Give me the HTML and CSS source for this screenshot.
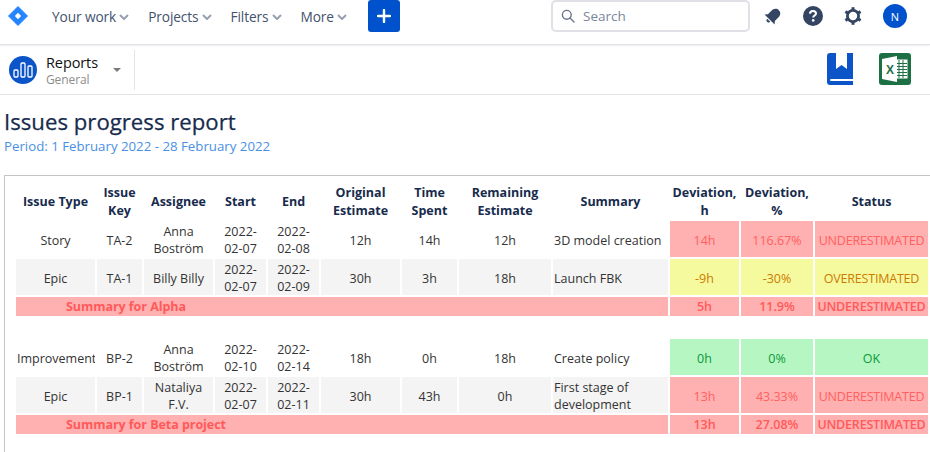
FILE: index.html
```html
<!DOCTYPE html>
<html lang="en">
<head>
<meta charset="utf-8">
<title>Issues progress report</title>
<link rel="stylesheet" href="styles.css">
</head>
<body>
<header class="topnav">
  <svg class="logo" width="20" height="20" viewBox="0 0 20 20"><path d="M10 0.500 L19.500 10 L10 19.500 L0.500 10 Z" fill="#2684ff" stroke="#2684ff" stroke-linejoin="round"/><path d="M10 6.800 L13.200 10 L10 13.200 L6.800 10 Z" fill="#fff"/></svg>
  <nav class="menu">
    <span class="menu-item">Your work<svg class="chev" width="10" height="6" viewBox="0 0 10 6"><path d="M1 1 L5 5 L9 1" fill="none" stroke="#97a0af" stroke-width="2"/></svg></span>
    <span class="menu-item">Projects<svg class="chev" width="10" height="6" viewBox="0 0 10 6"><path d="M1 1 L5 5 L9 1" fill="none" stroke="#97a0af" stroke-width="2"/></svg></span>
    <span class="menu-item">Filters<svg class="chev" width="10" height="6" viewBox="0 0 10 6"><path d="M1 1 L5 5 L9 1" fill="none" stroke="#97a0af" stroke-width="2"/></svg></span>
    <span class="menu-item">More<svg class="chev" width="10" height="6" viewBox="0 0 10 6"><path d="M1 1 L5 5 L9 1" fill="none" stroke="#97a0af" stroke-width="2"/></svg></span>
  </nav>
  <div class="create"><svg width="14" height="14" viewBox="0 0 14 14"><path d="M7 1 V13 M1 7 H13" stroke="#fff" stroke-width="2.400" stroke-linecap="round"/></svg></div>
  <div class="spring"></div>
  <div class="search">
    <svg width="14" height="14" viewBox="0 0 14 14"><circle cx="5.800" cy="5.800" r="4.400" fill="none" stroke="#6b778c" stroke-width="1.400"/><path d="M9 9 L13 13" stroke="#6b778c" stroke-width="1.400" stroke-linecap="round"/></svg>
    <span>Search</span>
  </div>
  <svg class="bell" width="18" height="18" viewBox="0 0 24 24"><g transform="rotate(45 12 12)" fill="#344563"><path d="M12 1 C7.500 1 5.500 4.500 5.500 9 V15 L2.500 18.500 H21.500 L18.500 15 V9 C18.500 4.500 16.500 1 12 1 Z"/><path d="M9 20 H15 C15 24 9 24 9 20 Z"/></g></svg>
  <svg class="help" width="20" height="20" viewBox="0 0 20 20"><circle cx="10" cy="10" r="10" fill="#344563"/><path d="M7 7.700 C7 5.900 8.400 5 10 5 C11.700 5 13 6 13 7.500 C13 9.600 10.200 9.500 10.200 11.600" fill="none" stroke="#fff" stroke-width="2"/><circle cx="10.200" cy="14.400" r="1.300" fill="#fff"/></svg>
  <svg class="gear" width="18" height="18" viewBox="0 0 18 18"><circle cx="9" cy="9" r="5.600" fill="none" stroke="#344563" stroke-width="2.800"/><g stroke="#344563" stroke-width="3"><path d="M9 0.200 V3"/><path d="M9 15 V17.800"/><path d="M1.400 4.600 L3.800 6"/><path d="M14.200 12 L16.600 13.400"/><path d="M1.400 13.400 L3.800 12"/><path d="M14.200 6 L16.600 4.600"/></g></svg>
  <div class="avatar">N</div>
</header>

<section class="subbar">
  <div class="project">
    <div class="project-icon"><svg width="20" height="16" viewBox="0 0 20 16"><g fill="none" stroke="#fff" stroke-width="1.300"><rect x="1" y="8" width="4" height="7" rx="1"/><rect x="8" y="1" width="4" height="14" rx="1"/><rect x="15" y="4" width="4" height="11" rx="1"/></g></svg></div>
    <div class="project-text"><div class="project-name">Reports</div><div class="project-sub">General</div></div>
    <div class="caret"></div>
  </div>
  <div class="spring"></div>
  <svg class="book" width="26" height="32" viewBox="0 0 26 32"><path d="M3 0 H9 V16 L14.500 12 L20 16 V0 H26 V26 H4 C2.700 26 2.700 28 4 28 H26 V32 H3 C1.200 32 0 30.800 0 29 V3 C0 1.200 1.200 0 3 0 Z" fill="#0b55c9"/></svg>
  <svg class="excel" width="32" height="32" viewBox="0 0 32 32"><rect width="32" height="32" rx="3" fill="#1d7044"/><path d="M3 6 L18 3 V29 L3 26 Z" fill="#fff"/><rect x="18" y="6.500" width="10.500" height="19" fill="#fff"/><g stroke="#1d7044" stroke-width="1"><path d="M20 7 V25 M24 7 V25 M18 10.500 H28 M18 13.500 H28 M18 16.500 H28 M18 19.500 H28 M18 22.500 H28"/></g><text x="7" y="21" class="excel-x">X</text></svg>
</section>

<main class="content">
  <h1>Issues progress report</h1>
  <p class="period">Period: 1 February 2022 - 28 February 2022</p>
  <div class="report-frame">
    <table class="report">
      <colgroup>
        <col class="c1"><col class="c2"><col class="c3"><col class="c4"><col class="c5"><col class="c6"><col class="c7"><col class="c8"><col class="c9"><col class="c10"><col class="c11"><col class="c12">
      </colgroup>
      <thead>
        <tr><th>Issue Type</th><th>Issue Key</th><th>Assignee</th><th>Start</th><th>End</th><th>Original Estimate</th><th>Time Spent</th><th>Remaining Estimate</th><th>Summary</th><th>Deviation, h</th><th>Deviation, %</th><th>Status</th></tr>
      </thead>
      <tbody>
        <tr><td>Story</td><td>TA-2</td><td>Anna Boström</td><td>2022-02-07</td><td>2022-02-08</td><td>12h</td><td>14h</td><td>12h</td><td class="left">3D model creation</td><td class="red">14h</td><td class="red">116.67%</td><td class="red status">UNDERESTIMATED</td></tr>
        <tr class="alt"><td>Epic</td><td>TA-1</td><td>Billy Billy</td><td>2022-02-07</td><td>2022-02-09</td><td>30h</td><td>3h</td><td>18h</td><td class="left">Launch FBK</td><td class="yellow">-9h</td><td class="yellow">-30%</td><td class="yellow status">OVERESTIMATED</td></tr>
        <tr class="sum"><td colspan="9"><span class="sum-label">Summary for Alpha</span></td><td>5h</td><td>11.9%</td><td class="status">UNDERESTIMATED</td></tr>
        <tr class="gap"><td colspan="12"></td></tr>
        <tr><td>Improvement</td><td>BP-2</td><td>Anna Boström</td><td>2022-02-10</td><td>2022-02-14</td><td>18h</td><td>0h</td><td>18h</td><td class="left">Create policy</td><td class="green">0h</td><td class="green">0%</td><td class="green">OK</td></tr>
        <tr class="alt"><td>Epic</td><td>BP-1</td><td>Nataliya F.V.</td><td>2022-02-07</td><td>2022-02-11</td><td>30h</td><td>43h</td><td>0h</td><td class="left">First stage of development</td><td class="red">13h</td><td class="red">43.33%</td><td class="red status">UNDERESTIMATED</td></tr>
        <tr class="sum"><td colspan="9"><span class="sum-label">Summary for Beta project</span></td><td>13h</td><td>27.08%</td><td class="status">UNDERESTIMATED</td></tr>
      </tbody>
    </table>
  </div>
</main>
</body>
</html>
```

FILE: styles.css
```css
* { box-sizing: border-box; }
html, body { margin: 0; height: 100%; overflow: hidden; }
body { font-family: "Open Sans", "Noto Sans", sans-serif; background: #fff; color: #333; }
.spring { flex: 1; }

.topnav { height: 45px; display: flex; align-items: center; border-bottom: 1px solid #dfe1e6; box-shadow: 0 1px 2px rgba(9,30,66,.08); padding: 0 23px 12px 8px; position: relative; }
.logo { margin-right: 24px; }
.menu { display: flex; gap: 19px; }
.menu-item { font-size: 13.700px; font-weight: 500; color: #42526e; display: flex; align-items: center; gap: 3px; letter-spacing: -.1px; }
.chev { margin-top: 1px; }
.create { width: 32px; height: 32px; margin-left: 21px; background: #0052cc; border-radius: 3px; display: flex; align-items: center; justify-content: center; }
.search { width: 199px; height: 32px; border: 2px solid #dfe1e6; border-radius: 5px; display: flex; align-items: center; gap: 8px; padding-left: 8px; margin-right: 14px; font-size: 13.500px; color: #7a869a; }
.bell { margin-right: 21px; }
.help { margin-right: 21px; }
.gear { margin-right: 21px; }
.avatar { width: 24px; height: 24px; border-radius: 50%; background: #0052cc; color: #fff; font-size: 11px; display: flex; align-items: center; justify-content: center; }

.subbar { height: 50px; border-bottom: 1px solid #e4e4e4; display: flex; align-items: center; padding-right: 19px; }
.project { display: flex; align-items: center; height: 40px; width: 135px; border-right: 1px solid #e4e4e4; padding-left: 9px; }
.project-icon { width: 28px; height: 28px; border-radius: 50%; background: #0b55c9; display: flex; align-items: center; justify-content: center; }
.project-text { margin: 2px 0 0 9px; padding-top: 1px; }
.project-name { font-size: 14.500px; line-height: 18px; color: #111; letter-spacing: -.1px; }
.project-sub { font-size: 12px; line-height: 16px; color: #8c8c8c; letter-spacing: -.1px; }
.caret { width: 0; height: 0; border: 4px solid transparent; border-top: 4px solid #7a7a7a; border-bottom: 0; margin-left: 15px; }
.book { margin-right: 26px; margin-top: -1px; }
.excel { margin-top: -1px; }
.excel-x { font: bold 12px "Liberation Sans", sans-serif; fill: #1d7044; }

.content { padding: 0 0 0 4px; }
h1 { margin: 12px 0 0; font-size: 22.200px; line-height: 30px; font-weight: 500; color: #172b4d; -webkit-text-stroke: .25px #172b4d; }
.period { margin: 0; font-size: 13.250px; line-height: 18px; color: #4a90e2; }

.report-frame { margin-top: 20px; border-top: 1px solid #c4c4c4; border-left: 1px solid #c4c4c4; padding-left: 9px; height: 277px; }
.report { table-layout: fixed; border-collapse: separate; border-spacing: 2px; width: 916px; font-size: 12.500px; line-height: 17px; text-align: center; }
.c1 { width: 79px; } .c2 { width: 45px; } .c3 { width: 69px; } .c4 { width: 51px; } .c5 { width: 51px; } .c6 { width: 79px; } .c7 { width: 55px; } .c8 { width: 92px; } .c9 { width: 115px; } .c10 { width: 69px; } .c11 { width: 72px; } .c12 { width: 113px; }
th { height: 41px; padding: 6px 0 0; line-height: 17.500px; font-weight: 700; color: #172b4d; }
td { height: 36px; padding: 2px 1px 0; color: #333; overflow: hidden; }
td.left { text-align: left; }
.alt td { background: #f4f4f4; }
td.status { letter-spacing: -.2px; white-space: nowrap; }
tbody tr td.red { background: #ffb0b0; color: #ff6060; }
tbody tr td.yellow { background: #f6fa9e; color: #cc7a00; }
tbody tr td.green { background: #b6f6c2; color: #0a9a3a; }
.sum td { height: 19px; line-height: 17px; background: #ffb0b0; color: #ff5a5a; font-weight: 600; padding: 0; }
.sum td:first-child { text-align: left; }
.sum-label { margin-left: 50px; font-weight: 700; letter-spacing: -.05px; }
.gap td { height: 19px; padding: 0; background: transparent; }
```
